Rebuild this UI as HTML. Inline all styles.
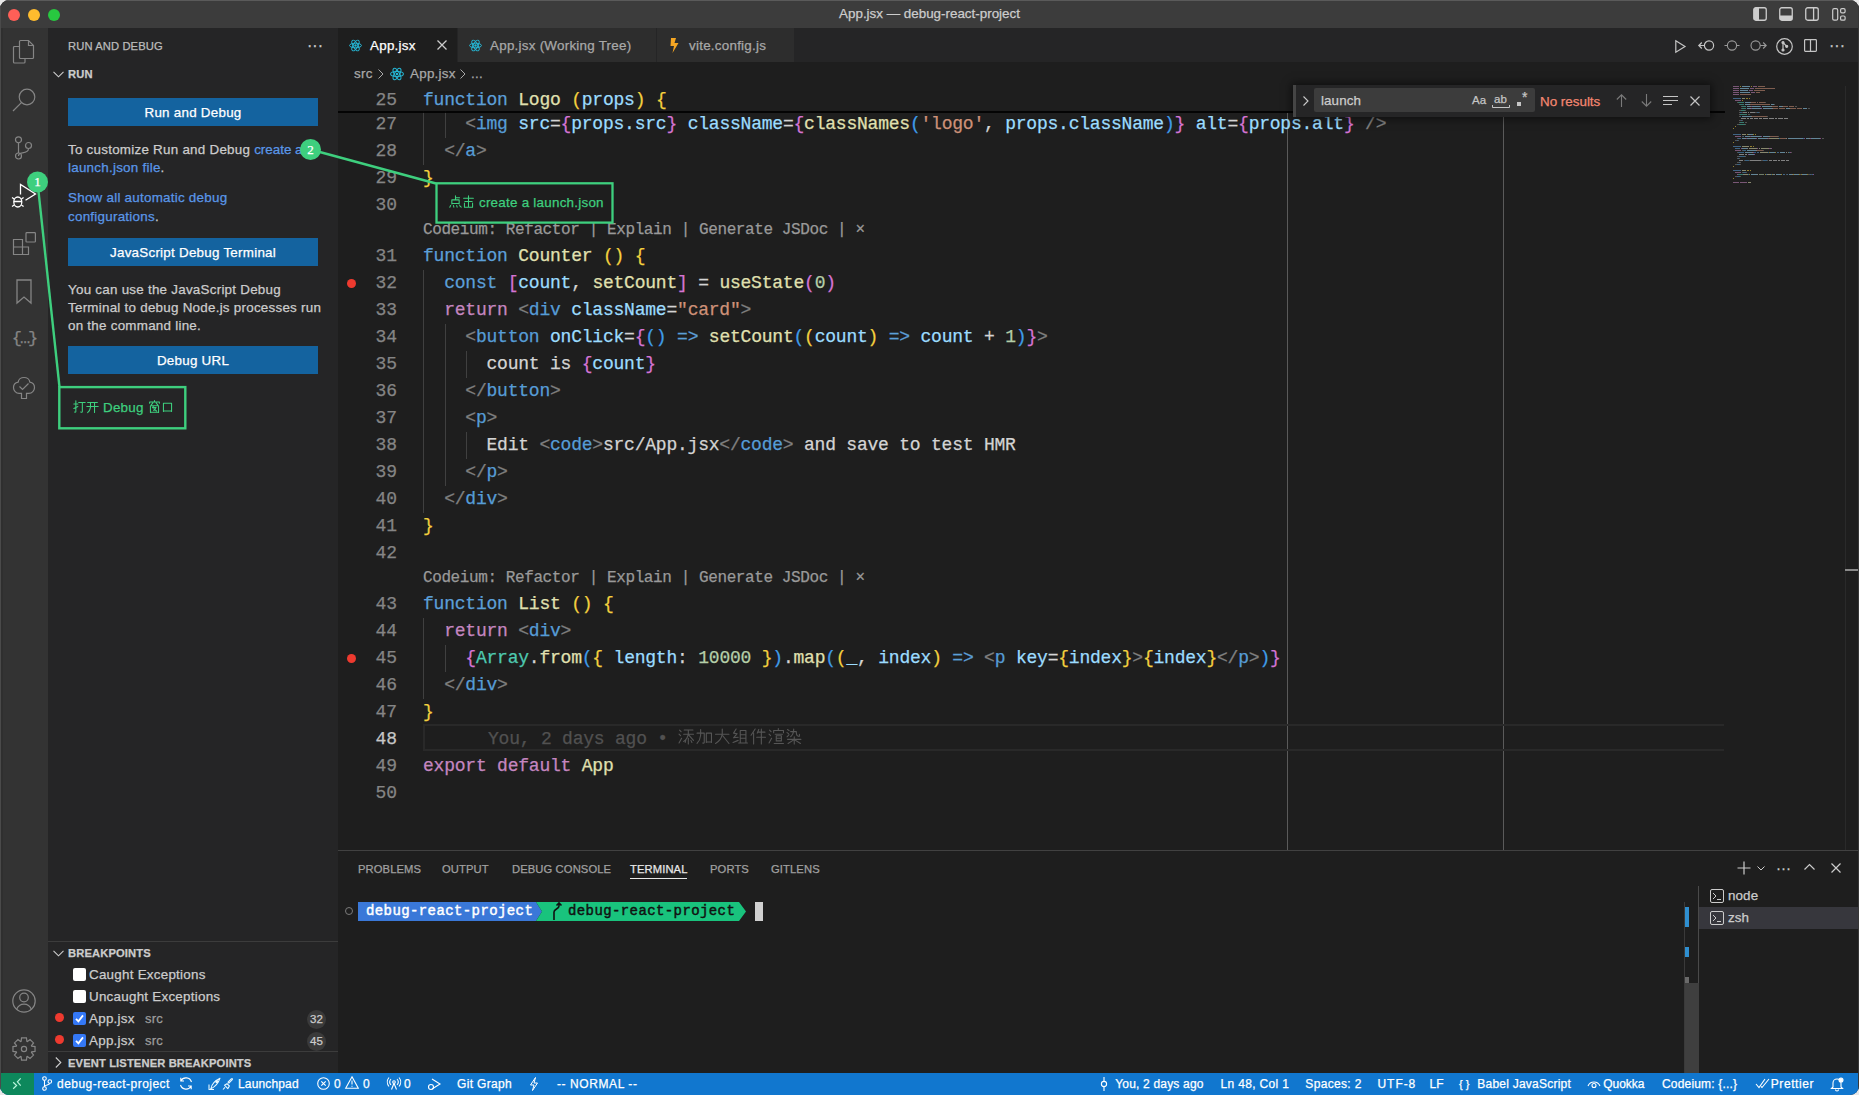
<!DOCTYPE html><html><head><meta charset="utf-8"><style>
*{margin:0;padding:0;box-sizing:border-box}
html,body{width:1859px;height:1095px;overflow:hidden;background:#e8e8e8;font-family:"Liberation Sans",sans-serif}
.ab,.cl,.ln,.btn,.st{-webkit-text-stroke:0.25px currentColor}
.ab{position:absolute}
.sans{font-family:"Liberation Sans",sans-serif}
.mono{font-family:"Liberation Mono",monospace}
.cl{position:absolute;left:423px;height:27px;line-height:27px;font-family:"Liberation Mono",monospace;font-size:18px;letter-spacing:-0.22px;white-space:pre;color:#d4d4d4}
.ln{position:absolute;left:340px;width:57px;text-align:right;height:27px;line-height:27px;font-family:"Liberation Mono",monospace;font-size:18px;color:#858585}
.ig{position:absolute;width:1px;background:#404040}
.btn{position:absolute;left:68px;width:250px;height:28px;background:#14639f;border-radius:0;color:#fff;text-align:center;line-height:30px;font-size:13.4px;letter-spacing:0.25px;letter-spacing:0.25px;font-family:"Liberation Sans",sans-serif}
.st{position:absolute;font-size:12px;line-height:22px;top:1073px;color:#fff;white-space:nowrap;font-family:"Liberation Sans",sans-serif}
svg{position:absolute;overflow:visible}
svg.cj{position:relative;display:inline-block;vertical-align:-1px;margin-right:0px}

</style></head><body>
<div class="ab" style="left:0;top:0;width:1859px;height:1095px;border-radius:9px;overflow:hidden;background:#1e1e1e">
<div class="ab" style="left:0;top:0;width:1859px;height:28px;background:#3c3c3c;border-top:1px solid #5a5a5a"></div>
<div class="ab" style="left:8px;top:9px;width:12px;height:12px;border-radius:6px;background:#ff5f57"></div>
<div class="ab" style="left:28px;top:9px;width:12px;height:12px;border-radius:6px;background:#febc2e"></div>
<div class="ab" style="left:48px;top:9px;width:12px;height:12px;border-radius:6px;background:#28c840"></div>
<div class="ab sans" style="left:0;width:1859px;top:0;height:28px;line-height:28px;text-align:center;font-size:13.4px;letter-spacing:0px;color:#cccccc">App.jsx — debug-react-project</div>
<svg style="left:1753px;top:7px" width="14" height="14"><rect x="0.75" y="0.75" width="12.5" height="12.5" rx="2" fill="none" stroke="#cccccc" stroke-width="1.3"/><rect x="1" y="1" width="5" height="12" fill="#cccccc"/></svg>
<svg style="left:1779px;top:7px" width="14" height="14"><rect x="0.75" y="0.75" width="12.5" height="12.5" rx="2" fill="none" stroke="#cccccc" stroke-width="1.3"/><rect x="1" y="8.5" width="12" height="4.5" fill="#cccccc"/></svg>
<svg style="left:1805px;top:7px" width="14" height="14"><rect x="0.75" y="0.75" width="12.5" height="12.5" rx="2" fill="none" stroke="#cccccc" stroke-width="1.3"/><line x1="8.6" y1="1" x2="8.6" y2="13" stroke="#cccccc" stroke-width="1.3"/></svg>
<svg style="left:1832px;top:8px" width="14" height="13"><rect x="0.7" y="0.7" width="5" height="11.5" rx="1.5" fill="none" stroke="#cccccc" stroke-width="1.2"/><rect x="8.6" y="0.7" width="4.5" height="4.2" rx="1.3" fill="none" stroke="#cccccc" stroke-width="1.2"/><rect x="8.6" y="8" width="4.5" height="4.2" rx="1.3" fill="none" stroke="#cccccc" stroke-width="1.2"/></svg>
<div class="ab" style="left:0;top:28px;width:48px;height:1045px;background:#333333"></div>
<div class="ab" style="left:0;top:172px;width:2px;height:48px;background:#ffffff"></div>
<svg style="left:12px;top:40px" width="24" height="24" viewBox="0 0 24 24" fill="none" stroke="#858585" stroke-width="1.2"><path d="M7.5 6.5H2.5a1 1 0 0 0-1 1V22a1 1 0 0 0 1 1H12a1 1 0 0 0 1-1v-3.5"/><path d="M7.5 1.5a1 1 0 0 1 1-1h8l5 5V17.5a1 1 0 0 1-1 1H8.5a1 1 0 0 1-1-1z"/><path d="M16.5 0.5v5h5"/></svg>
<svg style="left:12px;top:88px" width="24" height="24" viewBox="0 0 24 24" fill="none" stroke="#858585" stroke-width="1.2"><circle cx="15" cy="9" r="7.8"/><line x1="9.4" y1="14.6" x2="1" y2="23"/></svg>
<svg style="left:14px;top:136px" width="20" height="24" viewBox="0 0 20 24" fill="none" stroke="#858585" stroke-width="1.2"><circle cx="4.5" cy="3.8" r="3"/><circle cx="14.5" cy="9.5" r="3"/><circle cx="4.5" cy="20" r="3"/><path d="M4.5 6.8V17"/><path d="M14.5 12.5c0 3-3 4-6 4.3c-2.5 0.3-4 1-4 3.2"/></svg>
<svg style="left:10px;top:182px" width="28" height="28" viewBox="0 0 28 28" fill="none" stroke="#ffffff" stroke-width="1.3"><path d="M10.5 12.5V2.5l15 9.5-10 6.3"/><ellipse cx="7.8" cy="20" rx="4" ry="5"/><path d="M3.8 19.5h8M2 15.5l2.2 1.5M13.6 15.5l-2.2 1.5M2 24.5l2.2-1.5M13.6 24.5l-2.2-1.5"/></svg>
<svg style="left:12px;top:232px" width="24" height="24" viewBox="0 0 24 24" fill="none" stroke="#858585" stroke-width="1.2"><path d="M1.5 7.5h9v15h-9z M1.5 15h15v7.5h-6 M10.5 7.5v7.5"/><rect x="14" y="0.6" width="9.4" height="9.4" rx="0.8"/></svg>
<svg style="left:16px;top:279px" width="16" height="25" viewBox="0 0 16 25" fill="none" stroke="#858585" stroke-width="1.3"><path d="M1 1h14v23l-7-6-7 6z"/></svg>
<div class="ab mono" style="left:8px;top:329px;width:32px;text-align:center;font-size:17px;line-height:20px;color:#858585;letter-spacing:-2px">{…}</div>
<svg style="left:12px;top:376px" width="24" height="24" viewBox="0 0 24 24" fill="none" stroke="#858585" stroke-width="1.2"><path d="M12 1.5c3 0 5.5 2 5.8 4.6c2.8 0.5 4.7 2.8 4.7 5.5c0 3.1-2.5 5.7-5.6 5.7H14.5v5.2h-5V17.3H7.1c-3.1 0-5.6-2.6-5.6-5.7c0-2.7 1.9-5 4.7-5.5C6.5 3.5 9 1.5 12 1.5z"/><path d="M7.5 10.5l3 3 6-6"/></svg>
<svg style="left:12px;top:989px" width="24" height="24" viewBox="0 0 24 24" fill="none" stroke="#858585" stroke-width="1.2"><circle cx="12" cy="12" r="11.2"/><circle cx="12" cy="8.5" r="4.3"/><path d="M4.5 20.5c1.5-3.5 4-5.3 7.5-5.3s6 1.8 7.5 5.3"/></svg>
<svg style="left:12px;top:1037px" width="24" height="24" viewBox="0 0 24 24" fill="none" stroke="#858585" stroke-width="1.2"><path d="M9.53 0.97 L14.47 0.97 L14.89 4.33 L15.38 4.53 L18.05 2.46 L21.54 5.95 L19.47 8.62 L19.67 9.11 L23.03 9.53 L23.03 14.47 L19.67 14.89 L19.47 15.38 L21.54 18.05 L18.05 21.54 L15.38 19.47 L14.89 19.67 L14.47 23.03 L9.53 23.03 L9.11 19.67 L8.62 19.47 L5.95 21.54 L2.46 18.05 L4.53 15.38 L4.33 14.89 L0.97 14.47 L0.97 9.53 L4.33 9.11 L4.53 8.62 L2.46 5.95 L5.95 2.46 L8.62 4.53 L9.11 4.33Z"/><circle cx="12" cy="12" r="2.6"/></svg>
<div class="ab" style="left:48px;top:28px;width:290px;height:1045px;background:#252526"></div>
<div class="ab sans" style="left:68px;top:37px;font-size:11.2px;letter-spacing:0.12px;line-height:18px;color:#bbbbbb">RUN AND DEBUG</div>
<div class="ab sans" style="left:307px;top:37px;font-size:16px;color:#cccccc;letter-spacing:0px">···</div>
<svg style="left:53px;top:71px" width="11" height="7" viewBox="0 0 11 7" fill="none" stroke="#cccccc" stroke-width="1.1"><path d="M0.5 0.8L5.5 5.8L10.5 0.8"/></svg>
<div class="ab sans" style="left:68px;top:65px;font-size:11.2px;letter-spacing:0.12px;line-height:18px;color:#cccccc;font-weight:bold">RUN</div>
<div class="btn" style="top:98px">Run and Debug</div>
<div class="ab sans" style="left:68px;top:140.5px;width:270px;font-size:13.4px;letter-spacing:0.25px;line-height:18px;color:#cccccc">To customize Run and Debug <span style="color:#5a97e8;letter-spacing:0px">create a</span><br><span style="color:#5a97e8">launch.json file</span>.</div>
<div class="ab sans" style="left:68px;top:188px;width:270px;font-size:13.4px;letter-spacing:0.25px;line-height:19px;color:#5a97e8">Show all automatic debug<br>configurations<span style="color:#cccccc">.</span></div>
<div class="btn" style="top:238px">JavaScript Debug Terminal</div>
<div class="ab sans" style="left:68px;top:280.5px;width:270px;font-size:13.4px;letter-spacing:0.25px;line-height:18px;color:#cccccc">You can use the JavaScript Debug<br>Terminal to debug Node.js processes run<br>on the command line.</div>
<div class="btn" style="top:346px">Debug URL</div>
<div class="ab" style="left:48px;top:941px;width:290px;height:1px;background:#3c3c3c"></div>
<svg style="left:53px;top:950px" width="11" height="7" viewBox="0 0 11 7" fill="none" stroke="#cccccc" stroke-width="1.1"><path d="M0.5 0.8L5.5 5.8L10.5 0.8"/></svg>
<div class="ab sans" style="left:68px;top:944px;font-size:11.2px;letter-spacing:0.12px;line-height:18px;color:#cccccc;font-weight:bold">BREAKPOINTS</div>
<div class="ab" style="left:73px;top:968px;width:13px;height:13px;border-radius:2px;background:#ffffff"></div>
<div class="ab sans" style="left:89px;top:966px;font-size:13.4px;letter-spacing:0.25px;line-height:18px;color:#cccccc">Caught Exceptions</div>
<div class="ab" style="left:73px;top:990px;width:13px;height:13px;border-radius:2px;background:#ffffff"></div>
<div class="ab sans" style="left:89px;top:988px;font-size:13.4px;letter-spacing:0.25px;line-height:18px;color:#cccccc">Uncaught Exceptions</div>
<div class="ab" style="left:55px;top:1013px;width:9px;height:9px;border-radius:5px;background:#ee3a2f"></div>
<div class="ab" style="left:73px;top:1012px;width:13px;height:13px;border-radius:2px;background:#3478f6"></div><svg style="left:73px;top:1012px" width="13" height="13" viewBox="0 0 13 13" fill="none" stroke="#fff" stroke-width="1.8"><path d="M3 6.8l2.4 2.6 4.6-6"/></svg>
<div class="ab sans" style="left:89px;top:1010.0px;font-size:13.4px;letter-spacing:0.25px;line-height:18px;color:#cccccc">App.jsx</div>
<div class="ab sans" style="left:145px;top:1010px;font-size:13px;letter-spacing:0.2px;line-height:18px;color:#9d9d9d">src</div>
<div class="ab sans" style="left:307px;top:1010px;width:19px;height:19px;border-radius:10px;background:#3a3a3a;color:#cccccc;font-size:11.5px;line-height:19px;text-align:center">32</div>
<div class="ab" style="left:55px;top:1035px;width:9px;height:9px;border-radius:5px;background:#ee3a2f"></div>
<div class="ab" style="left:73px;top:1034px;width:13px;height:13px;border-radius:2px;background:#3478f6"></div><svg style="left:73px;top:1034px" width="13" height="13" viewBox="0 0 13 13" fill="none" stroke="#fff" stroke-width="1.8"><path d="M3 6.8l2.4 2.6 4.6-6"/></svg>
<div class="ab sans" style="left:89px;top:1032.0px;font-size:13.4px;letter-spacing:0.25px;line-height:18px;color:#cccccc">App.jsx</div>
<div class="ab sans" style="left:145px;top:1032px;font-size:13px;letter-spacing:0.2px;line-height:18px;color:#9d9d9d">src</div>
<div class="ab sans" style="left:307px;top:1032px;width:19px;height:19px;border-radius:10px;background:#3a3a3a;color:#cccccc;font-size:11.5px;line-height:19px;text-align:center">45</div>
<div class="ab" style="left:48px;top:1051px;width:290px;height:1px;background:#3c3c3c"></div>
<svg style="left:55px;top:1057px" width="7" height="11" viewBox="0 0 7 11" fill="none" stroke="#cccccc" stroke-width="1.1"><path d="M0.8 0.5L5.8 5.5L0.8 10.5"/></svg>
<div class="ab sans" style="left:68px;top:1054px;font-size:11.2px;letter-spacing:0.12px;line-height:18px;color:#cccccc;font-weight:bold">EVENT LISTENER BREAKPOINTS</div>
<div class="ab" style="left:338px;top:28px;width:1521px;height:34px;background:#252526"></div>
<div class="ab" style="left:338px;top:28px;width:119px;height:34px;background:#1e1e1e"></div>
<div class="ab" style="left:458px;top:28px;width:198px;height:34px;background:#2d2d2d"></div>
<div class="ab" style="left:657px;top:28px;width:137px;height:34px;background:#2d2d2d"></div>
<svg style="left:349px;top:39px" width="13" height="13" viewBox="-12 -12 24 24" fill="none" stroke="#26b6d4" stroke-width="1.8"><ellipse rx="11" ry="4.2"/><ellipse rx="11" ry="4.2" transform="rotate(60)"/><ellipse rx="11" ry="4.2" transform="rotate(120)"/><circle r="2.2" fill="#26b6d4" stroke="none"/></svg>
<div class="ab sans" style="left:370px;top:37px;font-size:13.4px;letter-spacing:0.25px;line-height:18px;color:#ffffff">App.jsx</div>
<svg style="left:437px;top:40px" width="10" height="10" viewBox="0 0 10 10" stroke="#cccccc" stroke-width="1.3"><path d="M0.5 0.5l9 9M9.5 0.5l-9 9"/></svg>
<svg style="left:469px;top:39px" width="13" height="13" viewBox="-12 -12 24 24" fill="none" stroke="#26b6d4" stroke-width="1.8"><ellipse rx="11" ry="4.2"/><ellipse rx="11" ry="4.2" transform="rotate(60)"/><ellipse rx="11" ry="4.2" transform="rotate(120)"/><circle r="2.2" fill="#26b6d4" stroke="none"/></svg>
<div class="ab sans" style="left:490px;top:37px;font-size:13.4px;letter-spacing:0.25px;line-height:18px;color:#a8a8a8">App.jsx (Working Tree)</div>
<svg style="left:670px;top:38px" width="9" height="15" viewBox="0 0 9 15"><path d="M1 0h5l-1.5 5H8.5L2.5 15l1.5-7H0.5z" fill="#f5a623"/></svg>
<div class="ab sans" style="left:689px;top:37px;font-size:13.4px;letter-spacing:0.25px;line-height:18px;color:#a8a8a8">vite.config.js</div>
<svg style="left:1675px;top:40px" width="11" height="13" viewBox="0 0 11 13" fill="none" stroke="#c5c5c5" stroke-width="1.2"><path d="M0.8 0.8L10 6.5L0.8 12.2Z"/></svg>
<svg style="left:1698px;top:39px" width="17" height="13" viewBox="0 0 17 13" fill="none" stroke="#c5c5c5" stroke-width="1.2"><circle cx="11" cy="6.5" r="4.6"/><path d="M6.4 6.5H0.8M3.8 3.5L0.8 6.5l3 3"/></svg>
<svg style="left:1724px;top:39px" width="16" height="13" viewBox="0 0 16 13" fill="none" stroke="#9a9a9a" stroke-width="1.1"><circle cx="8" cy="6.5" r="4.6"/><path d="M0.5 6.5h2.9M12.6 6.5h2.9"/></svg>
<svg style="left:1750px;top:39px" width="17" height="13" viewBox="0 0 17 13" fill="none" stroke="#9a9a9a" stroke-width="1.1"><circle cx="5.6" cy="6.5" r="4.6"/><path d="M10.2 6.5h5.6M13.2 3.5l3 3-3 3"/></svg>
<svg style="left:1776px;top:38px" width="17" height="17" viewBox="0 0 17 17" fill="none" stroke="#c5c5c5" stroke-width="1.2"><circle cx="8.5" cy="8.5" r="7.8"/><circle cx="7" cy="4.5" r="1" fill="#c5c5c5"/><circle cx="7" cy="12" r="1" fill="#c5c5c5"/><circle cx="10.7" cy="8.3" r="1" fill="#c5c5c5"/><path d="M7 4.5V12M7 4.5l3.7 3.8"/></svg>
<svg style="left:1804px;top:39px" width="13" height="13" viewBox="0 0 13 13" fill="none" stroke="#c5c5c5" stroke-width="1.2"><rect x="0.6" y="0.6" width="11.8" height="11.8" rx="0.8"/><path d="M6.5 0.6v11.8"/></svg>
<div class="ab sans" style="left:1829px;top:37px;font-size:16px;color:#c5c5c5">···</div>
<div class="ab sans" style="left:354px;top:65px;font-size:13.4px;letter-spacing:0.25px;line-height:18px;color:#a9a9a9;white-space:pre">src</div>
<svg style="left:378px;top:69px" width="6" height="10" viewBox="0 0 6 10" fill="none" stroke="#a9a9a9" stroke-width="1"><path d="M0.5 0.5l4.5 4.5-4.5 4.5"/></svg>
<svg style="left:390px;top:67px" width="14" height="14" viewBox="-12 -12 24 24" fill="none" stroke="#26b6d4" stroke-width="1.8"><ellipse rx="11" ry="4.2"/><ellipse rx="11" ry="4.2" transform="rotate(60)"/><ellipse rx="11" ry="4.2" transform="rotate(120)"/><circle r="2.2" fill="#26b6d4" stroke="none"/></svg>
<div class="ab sans" style="left:410px;top:65px;font-size:13.4px;letter-spacing:0.25px;line-height:18px;color:#a9a9a9">App.jsx</div>
<svg style="left:460px;top:69px" width="6" height="10" viewBox="0 0 6 10" fill="none" stroke="#a9a9a9" stroke-width="1"><path d="M0.5 0.5l4.5 4.5-4.5 4.5"/></svg>
<div class="ab sans" style="left:471px;top:65px;font-size:13.4px;letter-spacing:0.25px;line-height:18px;color:#a9a9a9">...</div>
<div class="ab" style="left:1287px;top:113px;width:1px;height:737px;background:#5a5a5a"></div>
<div class="ab" style="left:1503px;top:113px;width:1px;height:737px;background:#5a5a5a"></div>
<div class="ab" style="left:423px;top:724px;width:1301px;height:27px;border:2px solid #292929;border-right:none"></div>
<div class="ig" style="left:423.0px;top:110.7px;height:54.0px"></div>
<div class="ig" style="left:444.6px;top:110.7px;height:27.0px"></div>
<div class="ig" style="left:423.0px;top:269.7px;height:243.0px"></div>
<div class="ig" style="left:444.6px;top:323.7px;height:162.0px"></div>
<div class="ig" style="left:466.2px;top:350.7px;height:27.0px"></div>
<div class="ig" style="left:466.2px;top:431.7px;height:27.0px"></div>
<div class="ig" style="left:423.0px;top:617.7px;height:81.0px"></div>
<div class="ig" style="left:444.6px;top:644.7px;height:27.0px"></div>
<div class="ln" style="top:110.7px;">27</div>
<div class="cl" style="top:110.7px"><span style="color:#808080">    &lt;</span><span style="color:#569cd6">img</span><span style="color:#d4d4d4"> </span><span style="color:#9cdcfe">src</span><span style="color:#d4d4d4">=</span><span style="color:#d574d4">{</span><span style="color:#9cdcfe">props.src</span><span style="color:#d574d4">}</span><span style="color:#d4d4d4"> </span><span style="color:#9cdcfe">className</span><span style="color:#d4d4d4">=</span><span style="color:#d574d4">{</span><span style="color:#e0e0b0">classNames</span><span style="color:#3f9ce8">(</span><span style="color:#ce9178">&#x27;logo&#x27;</span><span style="color:#d4d4d4">, </span><span style="color:#9cdcfe">props.className</span><span style="color:#3f9ce8">)</span><span style="color:#d574d4">}</span><span style="color:#d4d4d4"> </span><span style="color:#9cdcfe">alt</span><span style="color:#d4d4d4">=</span><span style="color:#d574d4">{</span><span style="color:#9cdcfe">props.alt</span><span style="color:#d574d4">}</span><span style="color:#d4d4d4"> </span><span style="color:#808080">/&gt;</span></div>
<div class="ln" style="top:137.7px;">28</div>
<div class="cl" style="top:137.7px"><span style="color:#808080">  &lt;/</span><span style="color:#569cd6">a</span><span style="color:#808080">&gt;</span></div>
<div class="ln" style="top:164.7px;">29</div>
<div class="cl" style="top:164.7px"><span style="color:#f3d03e">}</span></div>
<div class="ln" style="top:191.7px;">30</div>
<div class="ln" style="top:242.7px;">31</div>
<div class="cl" style="top:242.7px"><span style="color:#5c9fd8">function</span><span style="color:#d4d4d4"> </span><span style="color:#e0e0b0">Counter</span><span style="color:#d4d4d4"> </span><span style="color:#f3d03e">()</span><span style="color:#d4d4d4"> </span><span style="color:#f3d03e">{</span></div>
<div class="ln" style="top:269.7px;">32</div>
<div class="cl" style="top:269.7px"><span style="color:#d4d4d4">  </span><span style="color:#5c9fd8">const</span><span style="color:#d4d4d4"> </span><span style="color:#d574d4">[</span><span style="color:#9cdcfe">count</span><span style="color:#d4d4d4">, </span><span style="color:#e0e0b0">setCount</span><span style="color:#d574d4">]</span><span style="color:#d4d4d4"> = </span><span style="color:#e0e0b0">useState</span><span style="color:#d574d4">(</span><span style="color:#b5cea8">0</span><span style="color:#d574d4">)</span></div>
<div class="ln" style="top:296.7px;">33</div>
<div class="cl" style="top:296.7px"><span style="color:#d4d4d4">  </span><span style="color:#c586c0">return</span><span style="color:#d4d4d4"> </span><span style="color:#808080">&lt;</span><span style="color:#569cd6">div</span><span style="color:#d4d4d4"> </span><span style="color:#9cdcfe">className</span><span style="color:#d4d4d4">=</span><span style="color:#ce9178">&quot;card&quot;</span><span style="color:#808080">&gt;</span></div>
<div class="ln" style="top:323.7px;">34</div>
<div class="cl" style="top:323.7px"><span style="color:#d4d4d4">    </span><span style="color:#808080">&lt;</span><span style="color:#569cd6">button</span><span style="color:#d4d4d4"> </span><span style="color:#9cdcfe">onClick</span><span style="color:#d4d4d4">=</span><span style="color:#d574d4">{</span><span style="color:#3f9ce8">()</span><span style="color:#d4d4d4"> </span><span style="color:#5c9fd8">=&gt;</span><span style="color:#d4d4d4"> </span><span style="color:#e0e0b0">setCount</span><span style="color:#3f9ce8">(</span><span style="color:#f3d03e">(</span><span style="color:#9cdcfe">count</span><span style="color:#f3d03e">)</span><span style="color:#d4d4d4"> </span><span style="color:#5c9fd8">=&gt;</span><span style="color:#d4d4d4"> </span><span style="color:#9cdcfe">count</span><span style="color:#d4d4d4"> + </span><span style="color:#b5cea8">1</span><span style="color:#3f9ce8">)</span><span style="color:#d574d4">}</span><span style="color:#808080">&gt;</span></div>
<div class="ln" style="top:350.7px;">35</div>
<div class="cl" style="top:350.7px"><span style="color:#d4d4d4">      count is </span><span style="color:#d574d4">{</span><span style="color:#9cdcfe">count</span><span style="color:#d574d4">}</span></div>
<div class="ln" style="top:377.7px;">36</div>
<div class="cl" style="top:377.7px"><span style="color:#808080">    &lt;/</span><span style="color:#569cd6">button</span><span style="color:#808080">&gt;</span></div>
<div class="ln" style="top:404.7px;">37</div>
<div class="cl" style="top:404.7px"><span style="color:#808080">    &lt;</span><span style="color:#569cd6">p</span><span style="color:#808080">&gt;</span></div>
<div class="ln" style="top:431.7px;">38</div>
<div class="cl" style="top:431.7px"><span style="color:#d4d4d4">      Edit </span><span style="color:#808080">&lt;</span><span style="color:#569cd6">code</span><span style="color:#808080">&gt;</span><span style="color:#d4d4d4">src/App.jsx</span><span style="color:#808080">&lt;/</span><span style="color:#569cd6">code</span><span style="color:#808080">&gt;</span><span style="color:#d4d4d4"> and save to test HMR</span></div>
<div class="ln" style="top:458.7px;">39</div>
<div class="cl" style="top:458.7px"><span style="color:#808080">    &lt;/</span><span style="color:#569cd6">p</span><span style="color:#808080">&gt;</span></div>
<div class="ln" style="top:485.7px;">40</div>
<div class="cl" style="top:485.7px"><span style="color:#808080">  &lt;/</span><span style="color:#569cd6">div</span><span style="color:#808080">&gt;</span></div>
<div class="ln" style="top:512.7px;">41</div>
<div class="cl" style="top:512.7px"><span style="color:#f3d03e">}</span></div>
<div class="ln" style="top:539.7px;">42</div>
<div class="ln" style="top:590.7px;">43</div>
<div class="cl" style="top:590.7px"><span style="color:#5c9fd8">function</span><span style="color:#d4d4d4"> </span><span style="color:#e0e0b0">List</span><span style="color:#d4d4d4"> </span><span style="color:#f3d03e">()</span><span style="color:#d4d4d4"> </span><span style="color:#f3d03e">{</span></div>
<div class="ln" style="top:617.7px;">44</div>
<div class="cl" style="top:617.7px"><span style="color:#d4d4d4">  </span><span style="color:#c586c0">return</span><span style="color:#d4d4d4"> </span><span style="color:#808080">&lt;</span><span style="color:#569cd6">div</span><span style="color:#808080">&gt;</span></div>
<div class="ln" style="top:644.7px;">45</div>
<div class="cl" style="top:644.7px"><span style="color:#d4d4d4">    </span><span style="color:#d574d4">{</span><span style="color:#4ec9b0">Array</span><span style="color:#d4d4d4">.</span><span style="color:#e0e0b0">from</span><span style="color:#3f9ce8">(</span><span style="color:#f3d03e">{</span><span style="color:#d4d4d4"> </span><span style="color:#9cdcfe">length</span><span style="color:#d4d4d4">: </span><span style="color:#b5cea8">10000</span><span style="color:#d4d4d4"> </span><span style="color:#f3d03e">}</span><span style="color:#3f9ce8">)</span><span style="color:#d4d4d4">.</span><span style="color:#e0e0b0">map</span><span style="color:#3f9ce8">(</span><span style="color:#f3d03e">(</span><span style="color:#9cdcfe">_</span><span style="color:#d4d4d4">, </span><span style="color:#9cdcfe">index</span><span style="color:#f3d03e">)</span><span style="color:#d4d4d4"> </span><span style="color:#5c9fd8">=&gt;</span><span style="color:#d4d4d4"> </span><span style="color:#808080">&lt;</span><span style="color:#569cd6">p</span><span style="color:#d4d4d4"> </span><span style="color:#9cdcfe">key</span><span style="color:#d4d4d4">=</span><span style="color:#f3d03e">{</span><span style="color:#9cdcfe">index</span><span style="color:#f3d03e">}</span><span style="color:#808080">&gt;</span><span style="color:#f3d03e">{</span><span style="color:#9cdcfe">index</span><span style="color:#f3d03e">}</span><span style="color:#808080">&lt;/</span><span style="color:#569cd6">p</span><span style="color:#808080">&gt;</span><span style="color:#3f9ce8">)</span><span style="color:#d574d4">}</span></div>
<div class="ln" style="top:671.7px;">46</div>
<div class="cl" style="top:671.7px"><span style="color:#808080">  &lt;/</span><span style="color:#569cd6">div</span><span style="color:#808080">&gt;</span></div>
<div class="ln" style="top:698.7px;">47</div>
<div class="cl" style="top:698.7px"><span style="color:#f3d03e">}</span></div>
<div class="ln" style="top:725.7px;color:#c6c6c6">48</div>
<div class="ln" style="top:752.7px;">49</div>
<div class="cl" style="top:752.7px"><span style="color:#c586c0">export</span><span style="color:#d4d4d4"> </span><span style="color:#c586c0">default</span><span style="color:#d4d4d4"> </span><span style="color:#e0e0b0">App</span></div>
<div class="ln" style="top:779.7px;">50</div>
<div class="cl" style="top:725.7px;left:488px;color:#515151">You, 2 days ago • <svg class="cj" style="margin-right:1.4px" width="16.5" height="16.5" viewBox="0 0 16 16" fill="none" stroke="#565656" stroke-width="1.05" stroke-linecap="round" stroke-linejoin="round"><path d="M1.5 2L3 3.5M1 6L2.5 7.5M1 14.5L3.5 10M6 2H14.5M5.5 6H15M10 2V6Q9 11 5.5 13M10.5 7L15 12M10 10V15.5M7.5 12L7 14M12.5 12L13.5 14"/></svg><svg class="cj" style="margin-right:1.4px" width="16.5" height="16.5" viewBox="0 0 16 16" fill="none" stroke="#565656" stroke-width="1.05" stroke-linecap="round" stroke-linejoin="round"><path d="M1 5H8V14Q8 15 6.5 14.5M4.5 1.5V7Q4 12 1 15M10 5V14M10 5H15V14M10 13.5H15"/></svg><svg class="cj" style="margin-right:1.4px" width="16.5" height="16.5" viewBox="0 0 16 16" fill="none" stroke="#565656" stroke-width="1.05" stroke-linecap="round" stroke-linejoin="round"><path d="M1.5 6H14.5M8 1V6Q7 12 1.5 15M8.5 7.5L14.5 15"/></svg><svg class="cj" style="margin-right:1.4px" width="16.5" height="16.5" viewBox="0 0 16 16" fill="none" stroke="#565656" stroke-width="1.05" stroke-linecap="round" stroke-linejoin="round"><path d="M4 1L1.5 5L5 5.5L1.5 9.5L6 9M1 14L6 12M8 2.5V14M8 2.5H13.5V14M8 6.5H13.5M8 10H13.5M6.5 14.5H15"/></svg><svg class="cj" style="margin-right:1.4px" width="16.5" height="16.5" viewBox="0 0 16 16" fill="none" stroke="#565656" stroke-width="1.05" stroke-linecap="round" stroke-linejoin="round"><path d="M5 1L1 7M3.5 5V15.5M8.5 1.5L7 5M7.5 4H14.5M6.5 9H15M11 1V15.5"/></svg><svg class="cj" style="margin-right:1.4px" width="16.5" height="16.5" viewBox="0 0 16 16" fill="none" stroke="#565656" stroke-width="1.05" stroke-linecap="round" stroke-linejoin="round"><path d="M1.5 2L3 3.5M1 6L2.5 7.5M1 14.5L3.5 10M10 0.5V2M5.5 4.5V2.5H15V4.5M7 6H14M8 7.5V12.5M8 7.5H13V12.5M8 10H13M8 12.5H13M6 15H15"/></svg><svg class="cj" style="margin-right:1.4px" width="16.5" height="16.5" viewBox="0 0 16 16" fill="none" stroke="#565656" stroke-width="1.05" stroke-linecap="round" stroke-linejoin="round"><path d="M1.5 1.5L3 2.5M1 4.5L2.5 5.5M1 8.5L3 6.5M4.5 3.5H10Q10 8 12 8H13V6M7.5 1Q7.5 6 4.5 8.5M1.5 11H14.5M8 8.5V15.5M7.5 11.5L2 15M8.5 11.5L14 15"/></svg></div>
<div class="ab mono" style="left:423px;top:217.7px;height:24px;line-height:24px;font-size:16px;letter-spacing:-0.4px;color:#999999;white-space:pre">Codeium: Refactor | Explain | Generate JSDoc | ×</div>
<div class="ab mono" style="left:423px;top:565.7px;height:24px;line-height:24px;font-size:16px;letter-spacing:-0.4px;color:#999999;white-space:pre">Codeium: Refactor | Explain | Generate JSDoc | ×</div>
<div class="ab" style="left:347.2px;top:278.9px;width:8.8px;height:8.8px;border-radius:5px;background:#ee3a2f"></div>
<div class="ab" style="left:347.2px;top:653.9px;width:8.8px;height:8.8px;border-radius:5px;background:#ee3a2f"></div>
<div class="ab" style="left:338px;top:86px;width:1387px;height:25px;background:#1e1e1e"></div>
<div class="ab" style="left:338px;top:111px;width:1387px;height:2px;background:#000000;opacity:0.85"></div>
<div class="ln" style="top:86.7px">25</div>
<div class="cl" style="top:86.7px"><span style="color:#5c9fd8">function</span><span style="color:#d4d4d4"> </span><span style="color:#e0e0b0">Logo</span><span style="color:#d4d4d4"> </span><span style="color:#f3d03e">(</span><span style="color:#9cdcfe">props</span><span style="color:#f3d03e">)</span><span style="color:#d4d4d4"> </span><span style="color:#f3d03e">{</span></div>
<div class="ab" style="left:1293px;top:85px;width:417px;height:32px;background:#252526;box-shadow:0 0 8px 2px rgba(0,0,0,0.5);border-left:3px solid #454545"></div>
<svg style="left:1303px;top:96px" width="6" height="10" viewBox="0 0 6 10" fill="none" stroke="#cccccc" stroke-width="1.1"><path d="M0.5 0.5l4.5 4.5-4.5 4.5"/></svg>
<div class="ab" style="left:1314px;top:88px;width:221px;height:24px;background:#3c3c3c;border-radius:2px"></div>
<div class="ab sans" style="left:1321px;top:92px;font-size:13.4px;letter-spacing:0.1px;line-height:18px;color:#cccccc">launch</div>
<div class="ab sans" style="left:1472px;top:93px;font-size:11.5px;line-height:14px;color:#c5c5c5">Aa</div>
<div class="ab sans" style="left:1494px;top:92px;font-size:11.5px;line-height:14px;color:#c5c5c5">ab</div>
<svg style="left:1492px;top:105px" width="18" height="3" viewBox="0 0 18 3" fill="none" stroke="#c5c5c5" stroke-width="1"><path d="M0.5 0v2.5h17V0"/></svg>
<div class="ab" style="left:1517px;top:102px;width:4px;height:4px;background:#c5c5c5"></div>
<div class="ab sans" style="left:1522px;top:90px;font-size:14px;line-height:14px;color:#c5c5c5">*</div>
<div class="ab sans" style="left:1540px;top:93px;font-size:13.4px;letter-spacing:0px;line-height:18px;color:#f48771">No results</div>
<svg style="left:1616px;top:94px" width="11" height="13" viewBox="0 0 11 13" fill="none" stroke="#7a7a7a" stroke-width="1.1"><path d="M5.5 1v12M0.8 5.5L5.5 0.8l4.7 4.7"/></svg>
<svg style="left:1641px;top:94px" width="11" height="13" viewBox="0 0 11 13" fill="none" stroke="#7a7a7a" stroke-width="1.1"><path d="M5.5 0v12M0.8 7.5l4.7 4.7 4.7-4.7"/></svg>
<svg style="left:1663px;top:95px" width="15" height="11" viewBox="0 0 15 11" fill="none" stroke="#c5c5c5" stroke-width="1.2"><path d="M0 1.5h15M0 5.5h15M0 9.5h9"/></svg>
<svg style="left:1690px;top:96px" width="10" height="10" viewBox="0 0 10 10" stroke="#c5c5c5" stroke-width="1.2"><path d="M0.5 0.5l9 9M9.5 0.5l-9 9"/></svg>
<div class="ab" style="left:1845px;top:86px;width:14px;height:764px;background:#1e1e1e;border-left:1px solid #2a2a2a"></div>
<div class="ab" style="left:1845px;top:569px;width:14px;height:2px;background:#8a8a8a"></div>
<div class="ab" style="left:1733px;top:86px;width:6px;height:1.3px;background:#c586c0;opacity:0.55"></div>
<div class="ab" style="left:1740px;top:86px;width:1px;height:1.3px;background:#f3d03e;opacity:0.55"></div>
<div class="ab" style="left:1742px;top:86px;width:8px;height:1.3px;background:#9cdcfe;opacity:0.55"></div>
<div class="ab" style="left:1751px;top:86px;width:1px;height:1.3px;background:#f3d03e;opacity:0.55"></div>
<div class="ab" style="left:1753px;top:86px;width:4px;height:1.3px;background:#c586c0;opacity:0.55"></div>
<div class="ab" style="left:1758px;top:86px;width:7px;height:1.3px;background:#ce9178;opacity:0.55"></div>
<div class="ab" style="left:1733px;top:88px;width:6px;height:1.3px;background:#c586c0;opacity:0.55"></div>
<div class="ab" style="left:1740px;top:88px;width:9px;height:1.3px;background:#9cdcfe;opacity:0.55"></div>
<div class="ab" style="left:1750px;top:88px;width:4px;height:1.3px;background:#c586c0;opacity:0.55"></div>
<div class="ab" style="left:1755px;top:88px;width:20px;height:1.3px;background:#ce9178;opacity:0.55"></div>
<div class="ab" style="left:1733px;top:90px;width:6px;height:1.3px;background:#c586c0;opacity:0.55"></div>
<div class="ab" style="left:1740px;top:90px;width:8px;height:1.3px;background:#9cdcfe;opacity:0.55"></div>
<div class="ab" style="left:1749px;top:90px;width:4px;height:1.3px;background:#c586c0;opacity:0.55"></div>
<div class="ab" style="left:1754px;top:90px;width:11px;height:1.3px;background:#ce9178;opacity:0.55"></div>
<div class="ab" style="left:1733px;top:92px;width:6px;height:1.3px;background:#c586c0;opacity:0.55"></div>
<div class="ab" style="left:1740px;top:92px;width:10px;height:1.3px;background:#9cdcfe;opacity:0.55"></div>
<div class="ab" style="left:1751px;top:92px;width:4px;height:1.3px;background:#c586c0;opacity:0.55"></div>
<div class="ab" style="left:1756px;top:92px;width:4px;height:1.3px;background:#ce9178;opacity:0.55"></div>
<div class="ab" style="left:1733px;top:94px;width:6px;height:1.3px;background:#c586c0;opacity:0.55"></div>
<div class="ab" style="left:1740px;top:94px;width:11px;height:1.3px;background:#ce9178;opacity:0.55"></div>
<div class="ab" style="left:1733px;top:98px;width:8px;height:1.3px;background:#5c9fd8;opacity:0.55"></div>
<div class="ab" style="left:1742px;top:98px;width:3px;height:1.3px;background:#e0e0b0;opacity:0.55"></div>
<div class="ab" style="left:1746px;top:98px;width:2px;height:1.3px;background:#f3d03e;opacity:0.55"></div>
<div class="ab" style="left:1749px;top:98px;width:1px;height:1.3px;background:#f3d03e;opacity:0.55"></div>
<div class="ab" style="left:1735px;top:100px;width:6px;height:1.3px;background:#c586c0;opacity:0.55"></div>
<div class="ab" style="left:1742px;top:100px;width:1px;height:1.3px;background:#f3d03e;opacity:0.55"></div>
<div class="ab" style="left:1737px;top:102px;width:1px;height:1.3px;background:#808080;opacity:0.55"></div>
<div class="ab" style="left:1738px;top:102px;width:6px;height:1.3px;background:#4ec9b0;opacity:0.55"></div>
<div class="ab" style="left:1745px;top:102px;width:5px;height:1.3px;background:#9cdcfe;opacity:0.55"></div>
<div class="ab" style="left:1750px;top:102px;width:1px;height:1.3px;background:#d4d4d4;opacity:0.55"></div>
<div class="ab" style="left:1751px;top:102px;width:5px;height:1.3px;background:#ce9178;opacity:0.55"></div>
<div class="ab" style="left:1757px;top:102px;width:1px;height:1.3px;background:#ce9178;opacity:0.55"></div>
<div class="ab" style="left:1759px;top:102px;width:6px;height:1.3px;background:#ce9178;opacity:0.55"></div>
<div class="ab" style="left:1765px;top:102px;width:1px;height:1.3px;background:#808080;opacity:0.55"></div>
<div class="ab" style="left:1739px;top:104px;width:1px;height:1.3px;background:#808080;opacity:0.55"></div>
<div class="ab" style="left:1740px;top:104px;width:4px;height:1.3px;background:#4ec9b0;opacity:0.55"></div>
<div class="ab" style="left:1745px;top:104px;width:4px;height:1.3px;background:#9cdcfe;opacity:0.55"></div>
<div class="ab" style="left:1749px;top:104px;width:1px;height:1.3px;background:#d4d4d4;opacity:0.55"></div>
<div class="ab" style="left:1750px;top:104px;width:20px;height:1.3px;background:#ce9178;opacity:0.55"></div>
<div class="ab" style="left:1771px;top:104px;width:3px;height:1.3px;background:#9cdcfe;opacity:0.55"></div>
<div class="ab" style="left:1774px;top:104px;width:1px;height:1.3px;background:#808080;opacity:0.55"></div>
<div class="ab" style="left:1741px;top:106px;width:1px;height:1.3px;background:#808080;opacity:0.55"></div>
<div class="ab" style="left:1742px;top:106px;width:4px;height:1.3px;background:#4ec9b0;opacity:0.55"></div>
<div class="ab" style="left:1747px;top:106px;width:3px;height:1.3px;background:#9cdcfe;opacity:0.55"></div>
<div class="ab" style="left:1750px;top:106px;width:1px;height:1.3px;background:#d4d4d4;opacity:0.55"></div>
<div class="ab" style="left:1751px;top:106px;width:1px;height:1.3px;background:#d574d4;opacity:0.55"></div>
<div class="ab" style="left:1752px;top:106px;width:8px;height:1.3px;background:#9cdcfe;opacity:0.55"></div>
<div class="ab" style="left:1760px;top:106px;width:1px;height:1.3px;background:#d574d4;opacity:0.55"></div>
<div class="ab" style="left:1762px;top:106px;width:9px;height:1.3px;background:#9cdcfe;opacity:0.55"></div>
<div class="ab" style="left:1771px;top:106px;width:1px;height:1.3px;background:#d4d4d4;opacity:0.55"></div>
<div class="ab" style="left:1772px;top:106px;width:6px;height:1.3px;background:#ce9178;opacity:0.55"></div>
<div class="ab" style="left:1779px;top:106px;width:3px;height:1.3px;background:#9cdcfe;opacity:0.55"></div>
<div class="ab" style="left:1782px;top:106px;width:1px;height:1.3px;background:#d4d4d4;opacity:0.55"></div>
<div class="ab" style="left:1783px;top:106px;width:5px;height:1.3px;background:#ce9178;opacity:0.55"></div>
<div class="ab" style="left:1789px;top:106px;width:5px;height:1.3px;background:#ce9178;opacity:0.55"></div>
<div class="ab" style="left:1795px;top:106px;width:2px;height:1.3px;background:#808080;opacity:0.55"></div>
<div class="ab" style="left:1741px;top:108px;width:1px;height:1.3px;background:#808080;opacity:0.55"></div>
<div class="ab" style="left:1742px;top:108px;width:4px;height:1.3px;background:#4ec9b0;opacity:0.55"></div>
<div class="ab" style="left:1747px;top:108px;width:3px;height:1.3px;background:#9cdcfe;opacity:0.55"></div>
<div class="ab" style="left:1750px;top:108px;width:1px;height:1.3px;background:#d4d4d4;opacity:0.55"></div>
<div class="ab" style="left:1751px;top:108px;width:1px;height:1.3px;background:#d574d4;opacity:0.55"></div>
<div class="ab" style="left:1752px;top:108px;width:9px;height:1.3px;background:#9cdcfe;opacity:0.55"></div>
<div class="ab" style="left:1761px;top:108px;width:1px;height:1.3px;background:#d574d4;opacity:0.55"></div>
<div class="ab" style="left:1763px;top:108px;width:9px;height:1.3px;background:#9cdcfe;opacity:0.55"></div>
<div class="ab" style="left:1772px;top:108px;width:1px;height:1.3px;background:#d4d4d4;opacity:0.55"></div>
<div class="ab" style="left:1773px;top:108px;width:5px;height:1.3px;background:#ce9178;opacity:0.55"></div>
<div class="ab" style="left:1779px;top:108px;width:6px;height:1.3px;background:#ce9178;opacity:0.55"></div>
<div class="ab" style="left:1786px;top:108px;width:3px;height:1.3px;background:#9cdcfe;opacity:0.55"></div>
<div class="ab" style="left:1789px;top:108px;width:1px;height:1.3px;background:#d4d4d4;opacity:0.55"></div>
<div class="ab" style="left:1790px;top:108px;width:6px;height:1.3px;background:#ce9178;opacity:0.55"></div>
<div class="ab" style="left:1797px;top:108px;width:5px;height:1.3px;background:#ce9178;opacity:0.55"></div>
<div class="ab" style="left:1803px;top:108px;width:4px;height:1.3px;background:#9cdcfe;opacity:0.55"></div>
<div class="ab" style="left:1808px;top:108px;width:2px;height:1.3px;background:#808080;opacity:0.55"></div>
<div class="ab" style="left:1739px;top:110px;width:2px;height:1.3px;background:#808080;opacity:0.55"></div>
<div class="ab" style="left:1741px;top:110px;width:4px;height:1.3px;background:#4ec9b0;opacity:0.55"></div>
<div class="ab" style="left:1745px;top:110px;width:1px;height:1.3px;background:#808080;opacity:0.55"></div>
<div class="ab" style="left:1739px;top:112px;width:1px;height:1.3px;background:#808080;opacity:0.55"></div>
<div class="ab" style="left:1740px;top:112px;width:2px;height:1.3px;background:#569cd6;opacity:0.55"></div>
<div class="ab" style="left:1742px;top:112px;width:1px;height:1.3px;background:#808080;opacity:0.55"></div>
<div class="ab" style="left:1743px;top:112px;width:4px;height:1.3px;background:#d4d4d4;opacity:0.55"></div>
<div class="ab" style="left:1748px;top:112px;width:1px;height:1.3px;background:#d4d4d4;opacity:0.55"></div>
<div class="ab" style="left:1750px;top:112px;width:5px;height:1.3px;background:#d4d4d4;opacity:0.55"></div>
<div class="ab" style="left:1755px;top:112px;width:2px;height:1.3px;background:#808080;opacity:0.55"></div>
<div class="ab" style="left:1757px;top:112px;width:2px;height:1.3px;background:#569cd6;opacity:0.55"></div>
<div class="ab" style="left:1759px;top:112px;width:1px;height:1.3px;background:#808080;opacity:0.55"></div>
<div class="ab" style="left:1739px;top:114px;width:1px;height:1.3px;background:#808080;opacity:0.55"></div>
<div class="ab" style="left:1740px;top:114px;width:7px;height:1.3px;background:#4ec9b0;opacity:0.55"></div>
<div class="ab" style="left:1748px;top:114px;width:2px;height:1.3px;background:#808080;opacity:0.55"></div>
<div class="ab" style="left:1739px;top:116px;width:1px;height:1.3px;background:#808080;opacity:0.55"></div>
<div class="ab" style="left:1740px;top:116px;width:1px;height:1.3px;background:#569cd6;opacity:0.55"></div>
<div class="ab" style="left:1742px;top:116px;width:9px;height:1.3px;background:#9cdcfe;opacity:0.55"></div>
<div class="ab" style="left:1751px;top:116px;width:1px;height:1.3px;background:#d4d4d4;opacity:0.55"></div>
<div class="ab" style="left:1752px;top:116px;width:15px;height:1.3px;background:#ce9178;opacity:0.55"></div>
<div class="ab" style="left:1767px;top:116px;width:1px;height:1.3px;background:#808080;opacity:0.55"></div>
<div class="ab" style="left:1741px;top:118px;width:5px;height:1.3px;background:#d4d4d4;opacity:0.55"></div>
<div class="ab" style="left:1747px;top:118px;width:2px;height:1.3px;background:#d4d4d4;opacity:0.55"></div>
<div class="ab" style="left:1750px;top:118px;width:3px;height:1.3px;background:#d4d4d4;opacity:0.55"></div>
<div class="ab" style="left:1754px;top:118px;width:4px;height:1.3px;background:#d4d4d4;opacity:0.55"></div>
<div class="ab" style="left:1759px;top:118px;width:3px;height:1.3px;background:#d4d4d4;opacity:0.55"></div>
<div class="ab" style="left:1763px;top:118px;width:5px;height:1.3px;background:#d4d4d4;opacity:0.55"></div>
<div class="ab" style="left:1769px;top:118px;width:5px;height:1.3px;background:#d4d4d4;opacity:0.55"></div>
<div class="ab" style="left:1775px;top:118px;width:2px;height:1.3px;background:#d4d4d4;opacity:0.55"></div>
<div class="ab" style="left:1778px;top:118px;width:5px;height:1.3px;background:#d4d4d4;opacity:0.55"></div>
<div class="ab" style="left:1784px;top:118px;width:4px;height:1.3px;background:#d4d4d4;opacity:0.55"></div>
<div class="ab" style="left:1739px;top:120px;width:2px;height:1.3px;background:#808080;opacity:0.55"></div>
<div class="ab" style="left:1741px;top:120px;width:1px;height:1.3px;background:#569cd6;opacity:0.55"></div>
<div class="ab" style="left:1742px;top:120px;width:1px;height:1.3px;background:#808080;opacity:0.55"></div>
<div class="ab" style="left:1739px;top:122px;width:1px;height:1.3px;background:#808080;opacity:0.55"></div>
<div class="ab" style="left:1740px;top:122px;width:4px;height:1.3px;background:#4ec9b0;opacity:0.55"></div>
<div class="ab" style="left:1745px;top:122px;width:2px;height:1.3px;background:#808080;opacity:0.55"></div>
<div class="ab" style="left:1737px;top:124px;width:2px;height:1.3px;background:#808080;opacity:0.55"></div>
<div class="ab" style="left:1739px;top:124px;width:6px;height:1.3px;background:#4ec9b0;opacity:0.55"></div>
<div class="ab" style="left:1745px;top:124px;width:1px;height:1.3px;background:#808080;opacity:0.55"></div>
<div class="ab" style="left:1735px;top:126px;width:1px;height:1.3px;background:#f3d03e;opacity:0.55"></div>
<div class="ab" style="left:1733px;top:128px;width:1px;height:1.3px;background:#f3d03e;opacity:0.55"></div>
<div class="ab" style="left:1733px;top:134px;width:8px;height:1.3px;background:#5c9fd8;opacity:0.55"></div>
<div class="ab" style="left:1742px;top:134px;width:4px;height:1.3px;background:#e0e0b0;opacity:0.55"></div>
<div class="ab" style="left:1747px;top:134px;width:1px;height:1.3px;background:#f3d03e;opacity:0.55"></div>
<div class="ab" style="left:1748px;top:134px;width:5px;height:1.3px;background:#9cdcfe;opacity:0.55"></div>
<div class="ab" style="left:1753px;top:134px;width:1px;height:1.3px;background:#f3d03e;opacity:0.55"></div>
<div class="ab" style="left:1755px;top:134px;width:1px;height:1.3px;background:#f3d03e;opacity:0.55"></div>
<div class="ab" style="left:1735px;top:136px;width:6px;height:1.3px;background:#c586c0;opacity:0.55"></div>
<div class="ab" style="left:1742px;top:136px;width:1px;height:1.3px;background:#808080;opacity:0.55"></div>
<div class="ab" style="left:1743px;top:136px;width:1px;height:1.3px;background:#569cd6;opacity:0.55"></div>
<div class="ab" style="left:1745px;top:136px;width:4px;height:1.3px;background:#9cdcfe;opacity:0.55"></div>
<div class="ab" style="left:1749px;top:136px;width:1px;height:1.3px;background:#d4d4d4;opacity:0.55"></div>
<div class="ab" style="left:1750px;top:136px;width:1px;height:1.3px;background:#d574d4;opacity:0.55"></div>
<div class="ab" style="left:1751px;top:136px;width:10px;height:1.3px;background:#9cdcfe;opacity:0.55"></div>
<div class="ab" style="left:1761px;top:136px;width:1px;height:1.3px;background:#d574d4;opacity:0.55"></div>
<div class="ab" style="left:1763px;top:136px;width:6px;height:1.3px;background:#9cdcfe;opacity:0.55"></div>
<div class="ab" style="left:1769px;top:136px;width:1px;height:1.3px;background:#d4d4d4;opacity:0.55"></div>
<div class="ab" style="left:1770px;top:136px;width:8px;height:1.3px;background:#ce9178;opacity:0.55"></div>
<div class="ab" style="left:1778px;top:136px;width:1px;height:1.3px;background:#808080;opacity:0.55"></div>
<div class="ab" style="left:1737px;top:138px;width:1px;height:1.3px;background:#808080;opacity:0.55"></div>
<div class="ab" style="left:1738px;top:138px;width:3px;height:1.3px;background:#569cd6;opacity:0.55"></div>
<div class="ab" style="left:1742px;top:138px;width:3px;height:1.3px;background:#9cdcfe;opacity:0.55"></div>
<div class="ab" style="left:1745px;top:138px;width:1px;height:1.3px;background:#d4d4d4;opacity:0.55"></div>
<div class="ab" style="left:1746px;top:138px;width:1px;height:1.3px;background:#d574d4;opacity:0.55"></div>
<div class="ab" style="left:1747px;top:138px;width:9px;height:1.3px;background:#9cdcfe;opacity:0.55"></div>
<div class="ab" style="left:1756px;top:138px;width:1px;height:1.3px;background:#d574d4;opacity:0.55"></div>
<div class="ab" style="left:1758px;top:138px;width:9px;height:1.3px;background:#9cdcfe;opacity:0.55"></div>
<div class="ab" style="left:1767px;top:138px;width:1px;height:1.3px;background:#d4d4d4;opacity:0.55"></div>
<div class="ab" style="left:1768px;top:138px;width:1px;height:1.3px;background:#d574d4;opacity:0.55"></div>
<div class="ab" style="left:1769px;top:138px;width:10px;height:1.3px;background:#e0e0b0;opacity:0.55"></div>
<div class="ab" style="left:1779px;top:138px;width:1px;height:1.3px;background:#3f9ce8;opacity:0.55"></div>
<div class="ab" style="left:1780px;top:138px;width:6px;height:1.3px;background:#ce9178;opacity:0.55"></div>
<div class="ab" style="left:1786px;top:138px;width:1px;height:1.3px;background:#d4d4d4;opacity:0.55"></div>
<div class="ab" style="left:1788px;top:138px;width:15px;height:1.3px;background:#9cdcfe;opacity:0.55"></div>
<div class="ab" style="left:1803px;top:138px;width:1px;height:1.3px;background:#3f9ce8;opacity:0.55"></div>
<div class="ab" style="left:1804px;top:138px;width:1px;height:1.3px;background:#d574d4;opacity:0.55"></div>
<div class="ab" style="left:1806px;top:138px;width:3px;height:1.3px;background:#9cdcfe;opacity:0.55"></div>
<div class="ab" style="left:1809px;top:138px;width:1px;height:1.3px;background:#d4d4d4;opacity:0.55"></div>
<div class="ab" style="left:1810px;top:138px;width:1px;height:1.3px;background:#d574d4;opacity:0.55"></div>
<div class="ab" style="left:1811px;top:138px;width:9px;height:1.3px;background:#9cdcfe;opacity:0.55"></div>
<div class="ab" style="left:1820px;top:138px;width:1px;height:1.3px;background:#d574d4;opacity:0.55"></div>
<div class="ab" style="left:1822px;top:138px;width:2px;height:1.3px;background:#808080;opacity:0.55"></div>
<div class="ab" style="left:1735px;top:140px;width:2px;height:1.3px;background:#808080;opacity:0.55"></div>
<div class="ab" style="left:1737px;top:140px;width:1px;height:1.3px;background:#569cd6;opacity:0.55"></div>
<div class="ab" style="left:1738px;top:140px;width:1px;height:1.3px;background:#808080;opacity:0.55"></div>
<div class="ab" style="left:1733px;top:142px;width:1px;height:1.3px;background:#f3d03e;opacity:0.55"></div>
<div class="ab" style="left:1733px;top:146px;width:8px;height:1.3px;background:#5c9fd8;opacity:0.55"></div>
<div class="ab" style="left:1742px;top:146px;width:7px;height:1.3px;background:#e0e0b0;opacity:0.55"></div>
<div class="ab" style="left:1750px;top:146px;width:2px;height:1.3px;background:#f3d03e;opacity:0.55"></div>
<div class="ab" style="left:1753px;top:146px;width:1px;height:1.3px;background:#f3d03e;opacity:0.55"></div>
<div class="ab" style="left:1735px;top:148px;width:5px;height:1.3px;background:#5c9fd8;opacity:0.55"></div>
<div class="ab" style="left:1741px;top:148px;width:1px;height:1.3px;background:#d574d4;opacity:0.55"></div>
<div class="ab" style="left:1742px;top:148px;width:5px;height:1.3px;background:#9cdcfe;opacity:0.55"></div>
<div class="ab" style="left:1747px;top:148px;width:1px;height:1.3px;background:#d4d4d4;opacity:0.55"></div>
<div class="ab" style="left:1749px;top:148px;width:8px;height:1.3px;background:#e0e0b0;opacity:0.55"></div>
<div class="ab" style="left:1757px;top:148px;width:1px;height:1.3px;background:#d574d4;opacity:0.55"></div>
<div class="ab" style="left:1759px;top:148px;width:1px;height:1.3px;background:#d4d4d4;opacity:0.55"></div>
<div class="ab" style="left:1761px;top:148px;width:8px;height:1.3px;background:#e0e0b0;opacity:0.55"></div>
<div class="ab" style="left:1769px;top:148px;width:1px;height:1.3px;background:#d574d4;opacity:0.55"></div>
<div class="ab" style="left:1770px;top:148px;width:1px;height:1.3px;background:#b5cea8;opacity:0.55"></div>
<div class="ab" style="left:1771px;top:148px;width:1px;height:1.3px;background:#d574d4;opacity:0.55"></div>
<div class="ab" style="left:1735px;top:150px;width:6px;height:1.3px;background:#c586c0;opacity:0.55"></div>
<div class="ab" style="left:1742px;top:150px;width:1px;height:1.3px;background:#808080;opacity:0.55"></div>
<div class="ab" style="left:1743px;top:150px;width:3px;height:1.3px;background:#569cd6;opacity:0.55"></div>
<div class="ab" style="left:1747px;top:150px;width:9px;height:1.3px;background:#9cdcfe;opacity:0.55"></div>
<div class="ab" style="left:1756px;top:150px;width:1px;height:1.3px;background:#d4d4d4;opacity:0.55"></div>
<div class="ab" style="left:1757px;top:150px;width:6px;height:1.3px;background:#ce9178;opacity:0.55"></div>
<div class="ab" style="left:1763px;top:150px;width:1px;height:1.3px;background:#808080;opacity:0.55"></div>
<div class="ab" style="left:1737px;top:152px;width:1px;height:1.3px;background:#808080;opacity:0.55"></div>
<div class="ab" style="left:1738px;top:152px;width:6px;height:1.3px;background:#569cd6;opacity:0.55"></div>
<div class="ab" style="left:1745px;top:152px;width:7px;height:1.3px;background:#9cdcfe;opacity:0.55"></div>
<div class="ab" style="left:1752px;top:152px;width:1px;height:1.3px;background:#d4d4d4;opacity:0.55"></div>
<div class="ab" style="left:1753px;top:152px;width:1px;height:1.3px;background:#d574d4;opacity:0.55"></div>
<div class="ab" style="left:1754px;top:152px;width:2px;height:1.3px;background:#3f9ce8;opacity:0.55"></div>
<div class="ab" style="left:1757px;top:152px;width:2px;height:1.3px;background:#5c9fd8;opacity:0.55"></div>
<div class="ab" style="left:1760px;top:152px;width:8px;height:1.3px;background:#e0e0b0;opacity:0.55"></div>
<div class="ab" style="left:1768px;top:152px;width:1px;height:1.3px;background:#3f9ce8;opacity:0.55"></div>
<div class="ab" style="left:1769px;top:152px;width:1px;height:1.3px;background:#f3d03e;opacity:0.55"></div>
<div class="ab" style="left:1770px;top:152px;width:5px;height:1.3px;background:#9cdcfe;opacity:0.55"></div>
<div class="ab" style="left:1775px;top:152px;width:1px;height:1.3px;background:#f3d03e;opacity:0.55"></div>
<div class="ab" style="left:1777px;top:152px;width:2px;height:1.3px;background:#5c9fd8;opacity:0.55"></div>
<div class="ab" style="left:1780px;top:152px;width:5px;height:1.3px;background:#9cdcfe;opacity:0.55"></div>
<div class="ab" style="left:1786px;top:152px;width:1px;height:1.3px;background:#d4d4d4;opacity:0.55"></div>
<div class="ab" style="left:1788px;top:152px;width:1px;height:1.3px;background:#b5cea8;opacity:0.55"></div>
<div class="ab" style="left:1789px;top:152px;width:1px;height:1.3px;background:#3f9ce8;opacity:0.55"></div>
<div class="ab" style="left:1790px;top:152px;width:1px;height:1.3px;background:#d574d4;opacity:0.55"></div>
<div class="ab" style="left:1791px;top:152px;width:1px;height:1.3px;background:#808080;opacity:0.55"></div>
<div class="ab" style="left:1739px;top:154px;width:5px;height:1.3px;background:#d4d4d4;opacity:0.55"></div>
<div class="ab" style="left:1745px;top:154px;width:2px;height:1.3px;background:#d4d4d4;opacity:0.55"></div>
<div class="ab" style="left:1748px;top:154px;width:1px;height:1.3px;background:#d574d4;opacity:0.55"></div>
<div class="ab" style="left:1749px;top:154px;width:5px;height:1.3px;background:#9cdcfe;opacity:0.55"></div>
<div class="ab" style="left:1754px;top:154px;width:1px;height:1.3px;background:#d574d4;opacity:0.55"></div>
<div class="ab" style="left:1737px;top:156px;width:2px;height:1.3px;background:#808080;opacity:0.55"></div>
<div class="ab" style="left:1739px;top:156px;width:6px;height:1.3px;background:#569cd6;opacity:0.55"></div>
<div class="ab" style="left:1745px;top:156px;width:1px;height:1.3px;background:#808080;opacity:0.55"></div>
<div class="ab" style="left:1737px;top:158px;width:1px;height:1.3px;background:#808080;opacity:0.55"></div>
<div class="ab" style="left:1738px;top:158px;width:1px;height:1.3px;background:#569cd6;opacity:0.55"></div>
<div class="ab" style="left:1739px;top:158px;width:1px;height:1.3px;background:#808080;opacity:0.55"></div>
<div class="ab" style="left:1739px;top:160px;width:4px;height:1.3px;background:#d4d4d4;opacity:0.55"></div>
<div class="ab" style="left:1744px;top:160px;width:1px;height:1.3px;background:#808080;opacity:0.55"></div>
<div class="ab" style="left:1745px;top:160px;width:4px;height:1.3px;background:#569cd6;opacity:0.55"></div>
<div class="ab" style="left:1749px;top:160px;width:1px;height:1.3px;background:#808080;opacity:0.55"></div>
<div class="ab" style="left:1750px;top:160px;width:11px;height:1.3px;background:#d4d4d4;opacity:0.55"></div>
<div class="ab" style="left:1761px;top:160px;width:2px;height:1.3px;background:#808080;opacity:0.55"></div>
<div class="ab" style="left:1763px;top:160px;width:4px;height:1.3px;background:#569cd6;opacity:0.55"></div>
<div class="ab" style="left:1767px;top:160px;width:1px;height:1.3px;background:#808080;opacity:0.55"></div>
<div class="ab" style="left:1769px;top:160px;width:3px;height:1.3px;background:#d4d4d4;opacity:0.55"></div>
<div class="ab" style="left:1773px;top:160px;width:4px;height:1.3px;background:#d4d4d4;opacity:0.55"></div>
<div class="ab" style="left:1778px;top:160px;width:2px;height:1.3px;background:#d4d4d4;opacity:0.55"></div>
<div class="ab" style="left:1781px;top:160px;width:4px;height:1.3px;background:#d4d4d4;opacity:0.55"></div>
<div class="ab" style="left:1786px;top:160px;width:3px;height:1.3px;background:#d4d4d4;opacity:0.55"></div>
<div class="ab" style="left:1737px;top:162px;width:2px;height:1.3px;background:#808080;opacity:0.55"></div>
<div class="ab" style="left:1739px;top:162px;width:1px;height:1.3px;background:#569cd6;opacity:0.55"></div>
<div class="ab" style="left:1740px;top:162px;width:1px;height:1.3px;background:#808080;opacity:0.55"></div>
<div class="ab" style="left:1735px;top:164px;width:2px;height:1.3px;background:#808080;opacity:0.55"></div>
<div class="ab" style="left:1737px;top:164px;width:3px;height:1.3px;background:#569cd6;opacity:0.55"></div>
<div class="ab" style="left:1740px;top:164px;width:1px;height:1.3px;background:#808080;opacity:0.55"></div>
<div class="ab" style="left:1733px;top:166px;width:1px;height:1.3px;background:#f3d03e;opacity:0.55"></div>
<div class="ab" style="left:1733px;top:170px;width:8px;height:1.3px;background:#5c9fd8;opacity:0.55"></div>
<div class="ab" style="left:1742px;top:170px;width:4px;height:1.3px;background:#e0e0b0;opacity:0.55"></div>
<div class="ab" style="left:1747px;top:170px;width:2px;height:1.3px;background:#f3d03e;opacity:0.55"></div>
<div class="ab" style="left:1750px;top:170px;width:1px;height:1.3px;background:#f3d03e;opacity:0.55"></div>
<div class="ab" style="left:1735px;top:172px;width:6px;height:1.3px;background:#c586c0;opacity:0.55"></div>
<div class="ab" style="left:1742px;top:172px;width:1px;height:1.3px;background:#808080;opacity:0.55"></div>
<div class="ab" style="left:1743px;top:172px;width:3px;height:1.3px;background:#569cd6;opacity:0.55"></div>
<div class="ab" style="left:1746px;top:172px;width:1px;height:1.3px;background:#808080;opacity:0.55"></div>
<div class="ab" style="left:1737px;top:174px;width:1px;height:1.3px;background:#d574d4;opacity:0.55"></div>
<div class="ab" style="left:1738px;top:174px;width:5px;height:1.3px;background:#4ec9b0;opacity:0.55"></div>
<div class="ab" style="left:1743px;top:174px;width:1px;height:1.3px;background:#d4d4d4;opacity:0.55"></div>
<div class="ab" style="left:1744px;top:174px;width:4px;height:1.3px;background:#e0e0b0;opacity:0.55"></div>
<div class="ab" style="left:1748px;top:174px;width:1px;height:1.3px;background:#3f9ce8;opacity:0.55"></div>
<div class="ab" style="left:1749px;top:174px;width:1px;height:1.3px;background:#f3d03e;opacity:0.55"></div>
<div class="ab" style="left:1751px;top:174px;width:6px;height:1.3px;background:#9cdcfe;opacity:0.55"></div>
<div class="ab" style="left:1757px;top:174px;width:1px;height:1.3px;background:#d4d4d4;opacity:0.55"></div>
<div class="ab" style="left:1759px;top:174px;width:5px;height:1.3px;background:#b5cea8;opacity:0.55"></div>
<div class="ab" style="left:1765px;top:174px;width:1px;height:1.3px;background:#f3d03e;opacity:0.55"></div>
<div class="ab" style="left:1766px;top:174px;width:1px;height:1.3px;background:#3f9ce8;opacity:0.55"></div>
<div class="ab" style="left:1767px;top:174px;width:1px;height:1.3px;background:#d4d4d4;opacity:0.55"></div>
<div class="ab" style="left:1768px;top:174px;width:3px;height:1.3px;background:#e0e0b0;opacity:0.55"></div>
<div class="ab" style="left:1771px;top:174px;width:1px;height:1.3px;background:#3f9ce8;opacity:0.55"></div>
<div class="ab" style="left:1772px;top:174px;width:1px;height:1.3px;background:#f3d03e;opacity:0.55"></div>
<div class="ab" style="left:1773px;top:174px;width:1px;height:1.3px;background:#9cdcfe;opacity:0.55"></div>
<div class="ab" style="left:1774px;top:174px;width:1px;height:1.3px;background:#d4d4d4;opacity:0.55"></div>
<div class="ab" style="left:1776px;top:174px;width:5px;height:1.3px;background:#9cdcfe;opacity:0.55"></div>
<div class="ab" style="left:1781px;top:174px;width:1px;height:1.3px;background:#f3d03e;opacity:0.55"></div>
<div class="ab" style="left:1783px;top:174px;width:2px;height:1.3px;background:#5c9fd8;opacity:0.55"></div>
<div class="ab" style="left:1786px;top:174px;width:1px;height:1.3px;background:#808080;opacity:0.55"></div>
<div class="ab" style="left:1787px;top:174px;width:1px;height:1.3px;background:#569cd6;opacity:0.55"></div>
<div class="ab" style="left:1789px;top:174px;width:3px;height:1.3px;background:#9cdcfe;opacity:0.55"></div>
<div class="ab" style="left:1792px;top:174px;width:1px;height:1.3px;background:#d4d4d4;opacity:0.55"></div>
<div class="ab" style="left:1793px;top:174px;width:1px;height:1.3px;background:#f3d03e;opacity:0.55"></div>
<div class="ab" style="left:1794px;top:174px;width:5px;height:1.3px;background:#9cdcfe;opacity:0.55"></div>
<div class="ab" style="left:1799px;top:174px;width:1px;height:1.3px;background:#f3d03e;opacity:0.55"></div>
<div class="ab" style="left:1800px;top:174px;width:1px;height:1.3px;background:#808080;opacity:0.55"></div>
<div class="ab" style="left:1801px;top:174px;width:1px;height:1.3px;background:#f3d03e;opacity:0.55"></div>
<div class="ab" style="left:1802px;top:174px;width:5px;height:1.3px;background:#9cdcfe;opacity:0.55"></div>
<div class="ab" style="left:1807px;top:174px;width:1px;height:1.3px;background:#f3d03e;opacity:0.55"></div>
<div class="ab" style="left:1808px;top:174px;width:2px;height:1.3px;background:#808080;opacity:0.55"></div>
<div class="ab" style="left:1810px;top:174px;width:1px;height:1.3px;background:#569cd6;opacity:0.55"></div>
<div class="ab" style="left:1811px;top:174px;width:1px;height:1.3px;background:#808080;opacity:0.55"></div>
<div class="ab" style="left:1812px;top:174px;width:1px;height:1.3px;background:#3f9ce8;opacity:0.55"></div>
<div class="ab" style="left:1813px;top:174px;width:1px;height:1.3px;background:#d574d4;opacity:0.55"></div>
<div class="ab" style="left:1735px;top:176px;width:2px;height:1.3px;background:#808080;opacity:0.55"></div>
<div class="ab" style="left:1737px;top:176px;width:3px;height:1.3px;background:#569cd6;opacity:0.55"></div>
<div class="ab" style="left:1740px;top:176px;width:1px;height:1.3px;background:#808080;opacity:0.55"></div>
<div class="ab" style="left:1733px;top:178px;width:1px;height:1.3px;background:#f3d03e;opacity:0.55"></div>
<div class="ab" style="left:1733px;top:182px;width:6px;height:1.3px;background:#c586c0;opacity:0.55"></div>
<div class="ab" style="left:1740px;top:182px;width:7px;height:1.3px;background:#c586c0;opacity:0.55"></div>
<div class="ab" style="left:1748px;top:182px;width:3px;height:1.3px;background:#e0e0b0;opacity:0.55"></div>
<div class="ab" style="left:338px;top:850px;width:1521px;height:1px;background:#414141"></div>
<div class="ab sans" style="left:358px;top:860px;font-size:11.2px;letter-spacing:0.12px;line-height:18px;color:#a0a0a0">PROBLEMS</div>
<div class="ab sans" style="left:442px;top:860px;font-size:11.2px;letter-spacing:0.12px;line-height:18px;color:#a0a0a0">OUTPUT</div>
<div class="ab sans" style="left:512px;top:860px;font-size:11.2px;letter-spacing:0.12px;line-height:18px;color:#a0a0a0">DEBUG CONSOLE</div>
<div class="ab sans" style="left:630px;top:860px;font-size:11.2px;letter-spacing:0.12px;line-height:18px;color:#e7e7e7">TERMINAL</div>
<div class="ab sans" style="left:710px;top:860px;font-size:11.2px;letter-spacing:0.12px;line-height:18px;color:#a0a0a0">PORTS</div>
<div class="ab sans" style="left:771px;top:860px;font-size:11.2px;letter-spacing:0.12px;line-height:18px;color:#a0a0a0">GITLENS</div>
<div class="ab" style="left:630px;top:878px;width:57px;height:1px;background:#e7e7e7"></div>
<svg style="left:1737px;top:861px" width="14" height="14" viewBox="0 0 14 14" stroke="#cccccc" stroke-width="1.2"><path d="M7 0.5v13M0.5 7h13"/></svg>
<svg style="left:1757px;top:866px" width="8" height="5" viewBox="0 0 8 5" fill="none" stroke="#cccccc" stroke-width="1"><path d="M0.5 0.5l3.5 3.5 3.5-3.5"/></svg>
<div class="ab sans" style="left:1776px;top:859px;font-size:15px;color:#cccccc">···</div>
<svg style="left:1804px;top:864px" width="11" height="6" viewBox="0 0 11 6" fill="none" stroke="#cccccc" stroke-width="1.2"><path d="M0.5 5.5l5-5 5 5"/></svg>
<svg style="left:1831px;top:863px" width="10" height="10" viewBox="0 0 10 10" stroke="#cccccc" stroke-width="1.2"><path d="M0.5 0.5l9 9M9.5 0.5l-9 9"/></svg>
<div class="ab" style="left:344.5px;top:907px;width:8px;height:8px;border-radius:4px;border:1.3px solid #7a7a7a"></div>
<svg style="left:358px;top:902px" width="400" height="19" viewBox="0 0 400 19"><path d="M0 0H178L184 9.5L178 19H0z" fill="#3a78d8"/><path d="M178 0H381L388 9.5L381 19H178L184 9.5z" fill="#19c37d"/><path d="M178 0L184 9.5L178 19" fill="none" stroke="#1f1f1f" stroke-width="0"/></svg>
<div class="ab mono" style="left:366px;top:902px;font-size:14px;-webkit-text-stroke:0.45px currentColor;letter-spacing:0.4px;line-height:19px;color:#ffffff;white-space:pre">debug-react-project</div>
<svg style="left:552px;top:903px" width="10" height="17" viewBox="0 0 10 17" fill="none" stroke="#111" stroke-width="1.6"><path d="M2 17V9c0-3 5-3 5-6V0M4.5 2.5L7 0l2.5 2.5"/></svg>
<div class="ab mono" style="left:568px;top:902px;font-size:14px;-webkit-text-stroke:0.45px currentColor;letter-spacing:0.4px;line-height:19px;color:#111111;white-space:pre">debug-react-project</div>
<div class="ab" style="left:755px;top:902px;width:8px;height:19px;background:#d0d0d0"></div>
<div class="ab" style="left:1698px;top:886px;width:1px;height:187px;background:#4a4a4a"></div>
<div class="ab" style="left:1699px;top:907px;width:160px;height:22px;background:#37373d"></div>
<svg style="left:1710px;top:889px" width="14" height="14" viewBox="0 0 14 14" fill="none" stroke="#cccccc" stroke-width="1"><rect x="0.5" y="0.5" width="13" height="13" rx="1.5"/><path d="M3 4l3 3-3 3M7 10.5h4"/></svg>
<div class="ab sans" style="left:1728px;top:887px;font-size:13.4px;letter-spacing:0.1px;line-height:18px;color:#cccccc">node</div>
<svg style="left:1710px;top:911px" width="14" height="14" viewBox="0 0 14 14" fill="none" stroke="#cccccc" stroke-width="1"><rect x="0.5" y="0.5" width="13" height="13" rx="1.5"/><path d="M3 4l3 3-3 3M7 10.5h4"/></svg>
<div class="ab sans" style="left:1728px;top:909px;font-size:13.4px;letter-spacing:0px;line-height:18px;color:#cccccc">zsh</div>
<div class="ab" style="left:1684px;top:902px;width:14px;height:171px;border-left:1px solid #3a3a3a"></div>
<div class="ab" style="left:1685px;top:907px;width:4px;height:20px;background:#2f8fd0"></div>
<div class="ab" style="left:1685px;top:947px;width:4px;height:10px;background:#2f8fd0"></div>
<div class="ab" style="left:1685px;top:977px;width:4px;height:8px;background:#6a6a6a"></div>
<div class="ab" style="left:1685px;top:983px;width:14px;height:90px;background:#3f3f3f"></div>
<div class="ab" style="left:0;top:1073px;width:1859px;height:22px;background:#1177cf"></div>
<div class="ab" style="left:0;top:1073px;width:34px;height:22px;background:#0d885c"></div>
<svg style="left:11px;top:1077px" width="13" height="13" viewBox="0 0 13 13" fill="none" stroke="#b8f5dc" stroke-width="1.2"><path d="M2.2 5.2L5.6 8.5L2.2 11.7M9.7 1.4L6.4 4.8L9.7 8.6"/></svg>
<svg style="left:42px;top:1076px" width="10" height="15" viewBox="0 0 10 15" fill="none" stroke="#fff" stroke-width="1.1"><circle cx="2.5" cy="2.5" r="1.8"/><circle cx="2.5" cy="12.5" r="1.8"/><circle cx="7.8" cy="5.5" r="1.8"/><path d="M2.5 4.3v6.4M7.8 7.3c0 2-5.3 1.5-5.3 3.5"/></svg>
<div class="st" style="left:57px;letter-spacing:0.46px">debug-react-project</div>
<svg style="left:179px;top:1077px" width="14" height="13" viewBox="0 0 14 13" fill="none" stroke="#fff" stroke-width="1.1"><path d="M12.5 5A5.8 5.8 0 0 0 1.8 4M1.5 8a5.8 5.8 0 0 0 10.7 1M1.8 0.8V4h3.2M12.2 12.2V9H9"/></svg>
<svg style="left:207px;top:1077px" width="28" height="14" viewBox="0 0 28 14" fill="none" stroke="#e6f7ff" stroke-width="1.1" stroke-linejoin="round"><path d="M4 11.5Q5 5 13 1.2Q10.5 9 3.6 11.9z"/><path d="M2 7.5V12.5H7"/><circle cx="9.8" cy="4.6" r="1" fill="#e6f7ff"/><path d="M16 12.5l2-2.2M17.5 8.2l2.5 -1.6 2.4 2.4-1.6 2.6z"/><path d="M21 5.2l3.5-3.5 1 0-0.2 1-3.4 3.4z"/></svg>
<div class="st" style="left:238px;letter-spacing:0.15px">Launchpad</div>
<svg style="left:317px;top:1077px" width="13" height="13" viewBox="0 0 13 13" fill="none" stroke="#fff" stroke-width="1.1"><circle cx="6.5" cy="6.5" r="5.8"/><path d="M4.3 4.3l4.4 4.4M8.7 4.3L4.3 8.7"/></svg>
<div class="st" style="left:334px">0</div>
<svg style="left:345px;top:1076px" width="14" height="13" viewBox="0 0 14 13" fill="none" stroke="#fff" stroke-width="1.1"><path d="M7 0.8L13.3 12.2H0.7z M7 4.5v4M7 9.8v1"/></svg>
<div class="st" style="left:363px">0</div>
<svg style="left:387px;top:1077px" width="14" height="13" viewBox="0 0 14 13" fill="none" stroke="#fff" stroke-width="1.1"><circle cx="7" cy="5" r="1.3"/><path d="M7 6.3L4.5 12.5M7 6.3l2.5 6.2M4 2a4.5 4.5 0 0 0 0 6M10 2a4.5 4.5 0 0 1 0 6M2 0.5a7 7 0 0 0 0 9M12 0.5a7 7 0 0 1 0 9"/></svg>
<div class="st" style="left:404px">0</div>
<svg style="left:427px;top:1077px" width="14" height="14" viewBox="0 0 14 14" fill="none" stroke="#fff" stroke-width="1.1"><path d="M5 2l8 5-8 5"/><circle cx="4" cy="10" r="2.5"/></svg>
<div class="st" style="left:457px;letter-spacing:0.33px">Git Graph</div>
<svg style="left:529px;top:1077px" width="10" height="14" viewBox="0 0 10 14" fill="none" stroke="#fff" stroke-width="1"><path d="M6.5 0.5L1.5 8h3.5L3.5 13.5 8.5 6H5z"/></svg>
<div class="st" style="left:557px;letter-spacing:0.58px">-- NORMAL --</div>
<svg style="left:1099px;top:1077px" width="10" height="14" viewBox="0 0 10 14" fill="none" stroke="#fff" stroke-width="1.1"><circle cx="5" cy="7" r="2.6"/><path d="M5 0v4.4M5 9.6V14"/></svg>
<div class="st" style="left:1115.2px;letter-spacing:0.19px">You, 2 days ago</div>
<div class="st" style="left:1220.5px;letter-spacing:0.33px">Ln 48, Col 1</div>
<div class="st" style="left:1305.3px;letter-spacing:0.34px">Spaces: 2</div>
<div class="st" style="left:1377.5px;letter-spacing:0.95px">UTF-8</div>
<div class="st" style="left:1429.6px;letter-spacing:-0.10px">LF</div>
<div class="st" style="left:1477.3px;letter-spacing:0.23px">Babel JavaScript</div>
<div class="st" style="left:1603.3px;letter-spacing:-0.04px">Quokka</div>
<div class="st" style="left:1662.0px;letter-spacing:0.18px">Codeium: {...}</div>
<div class="st" style="left:1770.8px;letter-spacing:0.57px">Prettier</div>
<div class="st" style="left:1459px;font-size:11px">{ }</div>
<svg style="left:1587px;top:1079px" width="14" height="10" viewBox="0 0 14 10" fill="none" stroke="#fff" stroke-width="1.1"><path d="M1 7a6.5 6.5 0 0 1 12 0"/><circle cx="7" cy="6.5" r="2"/></svg>
<svg style="left:1755px;top:1078px" width="15" height="11" viewBox="0 0 15 11" fill="none" stroke="#fff" stroke-width="1.1"><path d="M1 6l3 3.5L10 1M6 8.5l1 1L14 1"/></svg>
<svg style="left:1830px;top:1077px" width="14" height="14" viewBox="0 0 14 14" fill="none" stroke="#fff" stroke-width="1.1"><path d="M3 10V6a4 4 0 0 1 8 0v4l1.5 1.5h-11z M5.5 12.5a1.5 1.5 0 0 0 3 0"/><circle cx="11" cy="3" r="2" fill="#fff"/></svg>
<svg style="left:0;top:0" width="1859" height="1095"><line x1="37.5" y1="182" x2="59.5" y2="387" stroke="#3ecf7e" stroke-width="2.4"/><line x1="310.5" y1="149.5" x2="436" y2="183.5" stroke="#3ecf7e" stroke-width="2.4"/><rect x="59.3" y="387.1" width="126" height="41.2" fill="none" stroke="#3ecf7e" stroke-width="2.4"/><rect x="436.5" y="183.3" width="176" height="39.3" fill="none" stroke="#3ecf7e" stroke-width="2.3"/><circle cx="37.5" cy="182" r="10.5" fill="#3ecf7e"/><circle cx="310.5" cy="149.5" r="10.5" fill="#3ecf7e"/></svg>
<div class="ab" style="left:27px;top:173px;width:21px;height:18px;text-align:center;font-family:'Liberation Serif',serif;font-size:13px;line-height:18px;color:#fff">1</div>
<div class="ab" style="left:300px;top:140.5px;width:21px;height:18px;text-align:center;font-family:'Liberation Serif',serif;font-size:13px;line-height:18px;color:#fff">2</div>
<div class="ab sans" style="left:73px;top:399px;font-size:13.4px;letter-spacing:0.25px;line-height:18px;color:#3ecf7e;white-space:pre"><svg class="cj" style="margin-right:0px" width="13" height="13" viewBox="0 0 16 16" fill="none" stroke="#3ecf7e" stroke-width="1.3" stroke-linecap="round" stroke-linejoin="round"><path d="M1 5H6M3.5 1V14Q3.5 15.5 2 14.8M1 10.5L6 8M7 3H15M11.5 3V14Q11.5 15.5 9.5 14.8"/></svg><svg class="cj" style="margin-right:0px" width="13" height="13" viewBox="0 0 16 16" fill="none" stroke="#3ecf7e" stroke-width="1.3" stroke-linecap="round" stroke-linejoin="round"><path d="M2 3H14M1 8H15M5.5 3V9Q5 13 2 15.5M10.5 3V15.5"/></svg> Debug <svg class="cj" style="margin-right:0px" width="13" height="13" viewBox="0 0 16 16" fill="none" stroke="#3ecf7e" stroke-width="1.3" stroke-linecap="round" stroke-linejoin="round"><path d="M8 0.5V2M2 4V2.5H14V4M6 3.5L4 6M10 3.5L12 6M3 7V15.5M3 7H13V15.5M3 15H13M6.5 8L5.5 9.5M5.5 9.2H10L7 13M7 10.8L10.5 13.5"/></svg><svg class="cj" style="margin-right:0px" width="13" height="13" viewBox="0 0 16 16" fill="none" stroke="#3ecf7e" stroke-width="1.3" stroke-linecap="round" stroke-linejoin="round"><path d="M3 4V14M3 4H13V14M3 13.5H13"/></svg></div>
<div class="ab sans" style="left:449px;top:194px;font-size:13.4px;letter-spacing:0.25px;line-height:18px;color:#3ecf7e;white-space:pre"><svg class="cj" style="margin-right:0px" width="13" height="13" viewBox="0 0 16 16" fill="none" stroke="#3ecf7e" stroke-width="1.3" stroke-linecap="round" stroke-linejoin="round"><path d="M8 1V6M8 3.5H13M3.5 6V11M3.5 6H12.5V11M3.5 10.5H12.5M2 13L1 15M5.5 13L6 15M9.5 13L10 15M13 13L15 15"/></svg><svg class="cj" style="margin-right:0px" width="13" height="13" viewBox="0 0 16 16" fill="none" stroke="#3ecf7e" stroke-width="1.3" stroke-linecap="round" stroke-linejoin="round"><path d="M2 4H14M3.5 8H12.5M8 1V15M3 10V15H13V10"/></svg> create a launch.json</div>
<div class="ab" style="left:0;top:0;width:1px;height:1095px;background:#4a4a4a"></div>
<div class="ab" style="left:1px;top:28px;width:2px;height:1045px;background:#2f2f2f"></div>
<div class="ab" style="left:1858px;top:0;width:1px;height:1095px;background:#383838"></div>
</div></body></html>
